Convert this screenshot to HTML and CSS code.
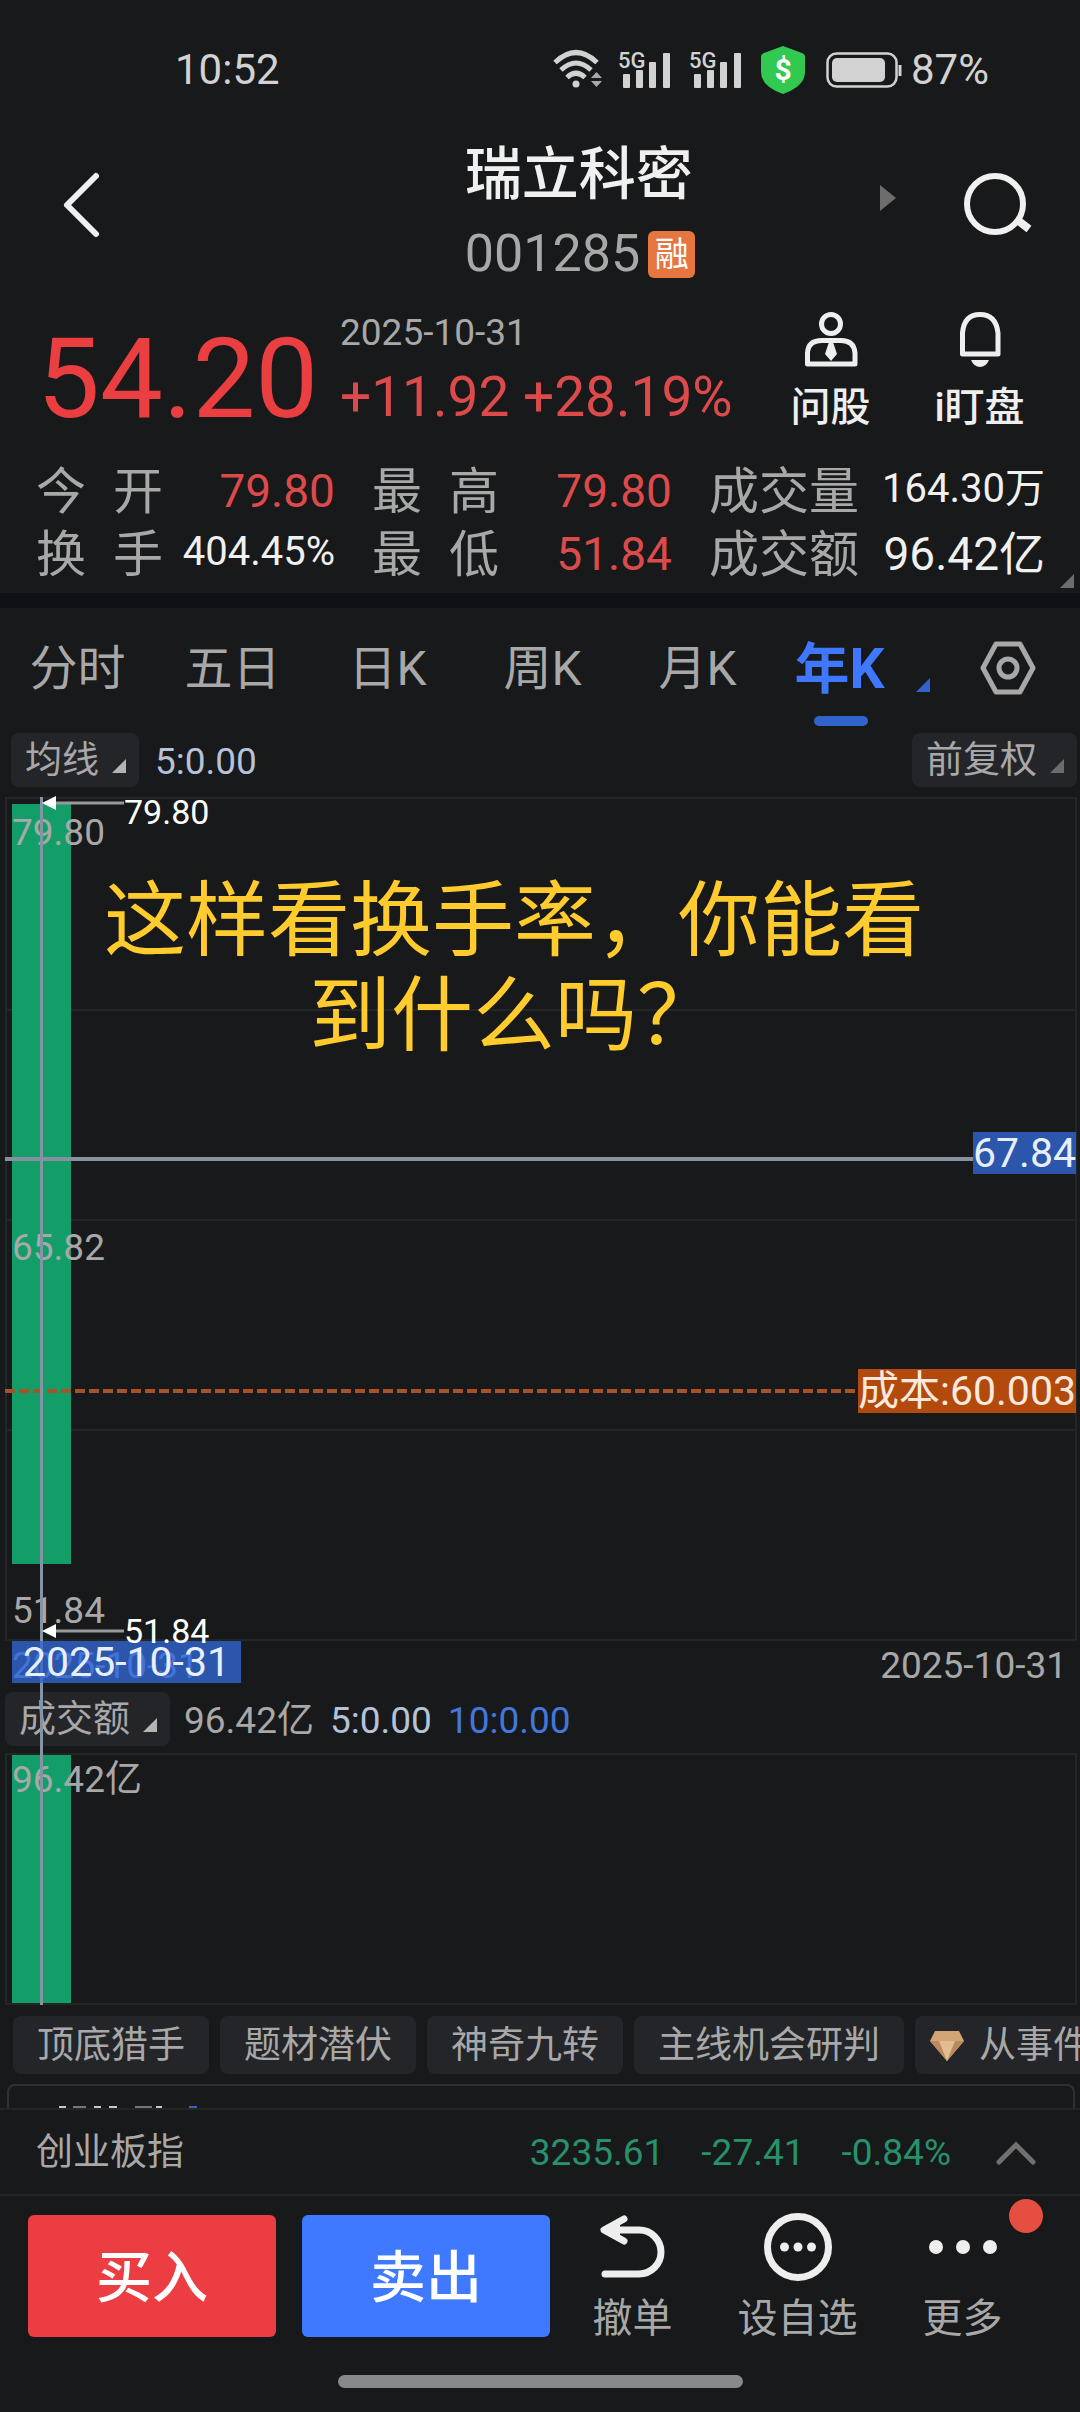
FILE: index.html
```html
<!DOCTYPE html>
<html lang="zh-CN">
<head>
<meta charset="utf-8">
<meta name="viewport" content="width=device-width, initial-scale=1">
<title>瑞立科密 001285</title>
<link rel="stylesheet" href="styles.css">
</head>
<body>
<div class="status">
  <time class="clock">10:52</time>
  <div class="indicators">
    <svg class="wifi" width="50" height="40" viewBox="0 0 50 40" fill="none" stroke="#d2d2d2" stroke-width="5">
      <path d="M2 12.500Q23 -7.500 44 12.500M8 20Q23 6 38 20M14 27.500Q23 19 32 27.500"/>
      <circle cx="23" cy="34" r="3.500" fill="#d2d2d2" stroke="none"/>
      <path d="M38 28l5.500-6 5.500 6zM38 31l5.500 6 5.500-6z" fill="#a8a8a8" stroke="none"/>
    </svg>
    <svg class="signal" width="54" height="40" viewBox="0 0 54 40" fill="#d2d2d2">
      <text class="net" x="0" y="18">5G</text>
      <rect x="5" y="24" width="7" height="14" rx="1"/><rect x="18" y="20" width="7" height="18" rx="1"/><rect x="31" y="12" width="7" height="26" rx="1"/><rect x="45" y="3" width="7" height="35" rx="1"/>
    </svg>
    <svg class="signal" width="54" height="40" viewBox="0 0 54 40" fill="#d2d2d2">
      <text class="net" x="0" y="18">5G</text>
      <rect x="5" y="24" width="7" height="14" rx="1"/><rect x="18" y="20" width="7" height="18" rx="1"/><rect x="31" y="12" width="7" height="26" rx="1"/><rect x="45" y="3" width="7" height="35" rx="1"/>
    </svg>
    <svg class="shield" width="46" height="50" viewBox="0 0 46 50">
      <path d="M23 1L42 8Q45 9 45 12V27Q45 41 23 49Q1 41 1 27V12Q1 9 4 8Z" fill="#32c951"/>
      <text class="dollar" x="23" y="35" text-anchor="middle">$</text>
    </svg>
    <svg class="battery" width="76" height="38" viewBox="0 0 76 38">
      <rect x="1.500" y="2.500" width="69" height="33" rx="9" fill="none" stroke="#d2d2d2" stroke-width="2.500"/>
      <rect x="6" y="7" width="53" height="24" rx="5" fill="#d2d2d2"/>
      <path d="M74 14v11" stroke="#d2d2d2" stroke-width="3"/>
    </svg>
    <span class="percent">87%</span>
  </div>
</div>

<header class="header">
  <button class="icon-btn back" aria-label="返回">
    <svg width="40" height="68" viewBox="0 0 40 68" fill="none" stroke="#f0f0f0" stroke-width="6" stroke-linecap="round" stroke-linejoin="round"><path d="M34 5L5 34L34 63"/></svg>
  </button>
  <div class="title">
    <h1>瑞立科密</h1>
    <p class="code">001285 <span class="badge">融</span></p>
  </div>
  <button class="icon-btn next" aria-label="下一只">
    <svg width="18" height="28" viewBox="0 0 18 28" fill="#6d6d6d"><path d="M1 1L17 14L1 27Z"/></svg>
  </button>
  <button class="icon-btn search" aria-label="搜索">
    <svg width="70" height="66" viewBox="0 0 70 66" fill="none" stroke="#f0f0f0" stroke-width="6"><circle cx="32" cy="32" r="28"/><path d="M53 47L66 57" stroke-width="8"/></svg>
  </button>
</header>

<section class="quote">
  <div class="price">54.20</div>
  <div class="change">
    <time class="day">2025-10-31</time>
    <div class="delta">+11.92 +28.19%</div>
  </div>
  <button class="quick">
    <svg width="56" height="56" viewBox="0 0 56 56" fill="none" stroke="#eee" stroke-width="5"><circle cx="28" cy="13" r="9.500"/><path d="M4.500 53V42Q5 29.500 19 29.500H38Q51 29.500 52 42V53Z" stroke-linejoin="round"/><path d="M26 31h4l4 12l-6 7l-6-7z" fill="#eee" stroke="none"/></svg>
    <span>问股</span>
  </button>
  <button class="quick">
    <svg width="56" height="56" viewBox="0 0 56 56" fill="none" stroke="#eee" stroke-width="5"><path d="M10.500 43V22Q12 3.500 28 3.500Q44 3.500 46 22V43Z" stroke-linejoin="round"/><path d="M19 49H37Q34 56 28 56Q22 56 19 49Z" fill="#eee" stroke="none"/></svg>
    <span>i盯盘</span>
  </button>
</section>

<dl class="stats">
  <div><dt>今开</dt><dd class="up">79.80</dd></div>
  <div><dt>最高</dt><dd class="up">79.80</dd></div>
  <div><dt class="wide">成交量</dt><dd class="small">164.30万</dd></div>
  <div><dt>换手</dt><dd class="small">404.45%</dd></div>
  <div><dt>最低</dt><dd class="up">51.84</dd></div>
  <div><dt class="wide">成交额</dt><dd>96.42亿</dd></div>
  <i class="corner"></i>
</dl>

<nav class="tabs">
  <button>分时</button>
  <button>五日</button>
  <button>日K</button>
  <button>周K</button>
  <button>月K</button>
  <button class="active"><span>年K</span><i class="fold blue"></i></button>
  <button class="settings" aria-label="设置">
    <svg width="58" height="56" viewBox="0 0 58 56" fill="none" stroke="#a8a8a8" stroke-width="5" stroke-linejoin="round"><path d="M17 4H41L54 28L41 52H17L4 28Z"/><circle cx="29" cy="28" r="9"/></svg>
  </button>
</nav>

<main>
  <div class="tools-row">
    <button class="pill">均线<i class="fold"></i></button>
    <span class="ma5">5:0.00</span>
    <button class="pill right">前复权<i class="fold dim"></i></button>
  </div>

  <div class="charts">
    <div class="plot price-plot">
      <div class="cell"></div><div class="cell"></div><div class="cell"></div><div class="cell"></div>
      <div class="candle"></div>
      <span class="axis axis-top">79.80</span>
      <span class="axis axis-mid">65.82</span>
      <span class="axis axis-low">51.84</span>
      <div class="cost"><span>成本:60.003</span></div>
      <div class="cursor"><span>67.84</span></div>
      <p class="caption">这样看换手率，你能看<br>到什么吗？</p>
      <div class="pointer high"><svg width="82" height="16" viewBox="0 0 82 16"><path d="M12 8H82" stroke="#999" stroke-width="3"/><path d="M0 8L14 1V15Z" fill="#fff"/></svg><span>79.80</span></div>
      <div class="pointer low"><svg width="82" height="16" viewBox="0 0 82 16"><path d="M12 8H82" stroke="#999" stroke-width="3"/><path d="M0 8L14 1V15Z" fill="#fff"/></svg><span>51.84</span></div>
    </div>
    <div class="dates">
      <time class="ghost">2025-10-31</time>
      <time>2025-10-31</time>
      <time class="picked">2025-10-31</time>
    </div>
    <div class="volume-row">
      <button class="pill">成交额<i class="fold"></i></button>
      <span class="amount">96.42亿</span>
      <span class="ma5">5:0.00</span>
      <span class="ma10">10:0.00</span>
    </div>
    <div class="plot volume-plot">
      <div class="volume-bar"></div>
      <span class="axis">96.42亿</span>
    </div>
    <div class="crosshair"></div>
  </div>

  <div class="strategies">
    <button>顶底猎手</button>
    <button>题材潜伏</button>
    <button>神奇九转</button>
    <button>主线机会研判</button>
    <button class="vip"><svg width="36" height="32" viewBox="0 0 36 32"><path d="M6 1H30L35 11L18 31L1 11Z" fill="#d3a574"/><path d="M1 11H35L18 31Z" fill="#b98a5c"/><path d="M10 11H26L18 31Z" fill="#e2bd92"/></svg>从事件</button>
  </div>
  <div class="card">
    <svg width="140" height="1" viewBox="0 0 140 1"><path d="M0 0H7M35 0H42M50 0H58M97 0H103" stroke="#c8c8c8" stroke-width="2"/><path d="M14 0H27M76 0H93" stroke="#777" stroke-width="2"/><path d="M130 0H138" stroke="#3a66b8" stroke-width="2"/></svg>
  </div>
</main>

<div class="index-bar">
  <span class="index-name">创业板指</span>
  <span>3235.61</span>
  <span>-27.41</span>
  <span>-0.84%</span>
  <button class="icon-btn expand" aria-label="展开"><svg width="44" height="28" viewBox="0 0 44 28" fill="none" stroke="#707070" stroke-width="5" stroke-linecap="round"><path d="M5 23L22 6L39 23"/></svg></button>
</div>

<footer class="actions">
  <div class="trade">
    <button class="buy">买入</button>
    <button class="sell">卖出</button>
  </div>
  <div class="tools">
    <button>
      <svg width="72" height="72" viewBox="0 0 72 72" fill="none" stroke="#eee" stroke-width="7" stroke-linecap="round" stroke-linejoin="round"><path d="M8 63H42A22 22 0 0 0 42 19H8M27 8L7 19L27 30"/><path d="M7 19L22 11V27Z" fill="#eee" stroke-width="2"/></svg>
      <span>撤单</span>
    </button>
    <button>
      <svg width="72" height="72" viewBox="0 0 72 72" fill="#eee"><circle cx="36" cy="36" r="30.500" fill="none" stroke="#eee" stroke-width="7"/><circle cx="22.500" cy="36" r="4.500"/><circle cx="36" cy="36" r="4.500"/><circle cx="49.500" cy="36" r="4.500"/></svg>
      <span>设自选</span>
    </button>
    <button>
      <svg width="72" height="72" viewBox="0 0 72 72" fill="#eee"><circle cx="9" cy="36" r="7"/><circle cx="36" cy="36" r="7"/><circle cx="63" cy="36" r="7"/></svg>
      <span>更多</span>
      <i class="dot"></i>
    </button>
  </div>
</footer>
<div class="home"></div>
</body>
</html>
```
FILE: styles.css
```css
* {
  box-sizing: border-box;
}

body {
  margin: 0;
  background: #17191a;
  color: #a8a8a8;
  font-family: Roboto, "Noto Sans CJK SC", sans-serif;
  font-size: 37px;
  line-height: 48px;
  overflow-x: hidden;
}

button {
  margin: 0;
  padding: 0;
  border: 0;
  background: none;
  color: inherit;
  font: inherit;
  white-space: nowrap;
}

svg {
  display: block;
  flex: none;
  overflow: visible;
}

h1,
p,
dl,
dd {
  margin: 0;
}

/* Status bar */
.status {
  display: flex;
  justify-content: space-between;
  align-items: center;
  height: 140px;
  padding: 0 91px 0 175px;
  color: #d2d2d2;
  font-size: 42px;
}

.indicators {
  display: flex;
  align-items: center;
}

.wifi {
  margin-right: 15px;
}

.signal {
  margin-right: 17px;
}

.net {
  font-size: 22px;
  font-weight: 500;
}

.shield {
  margin-right: 20px;
}

.dollar {
  fill: #fff;
  font-size: 30px;
  font-weight: 700;
}

.battery {
  margin-right: 9px;
}

/* Title */
.header {
  display: grid;
  grid-template-columns: 45% 1fr auto auto;
  align-items: start;
  height: 160px;
  padding-right: 47px;
}

.back {
  justify-self: start;
  padding: 31px 40px 0 62px;
}

.title h1 {
  color: #f0f0f0;
  font-size: 57px;
  font-weight: 500;
  line-height: 70px;
}

.code {
  display: flex;
  align-items: center;
  gap: 8px;
  margin-top: 20px;
  font-size: 52px;
}

.badge {
  width: 47px;
  height: 47px;
  border-radius: 6px;
  background: #e5763f;
  color: #fff;
  font-size: 34px;
  line-height: 47px;
  text-align: center;
}

.next {
  padding: 44px 66px 0 0;
}

.search {
  padding-top: 32px;
}

/* Quote */
.quote {
  display: grid;
  grid-template-columns: 303px 1fr 149px 149px;
  height: 160px;
  padding: 11px 26px 0 37px;
}

.price {
  color: #ea3e41;
  font-size: 112px;
  line-height: 136px;
}

.day {
  display: block;
  font-size: 37px;
  line-height: 44px;
}

.delta {
  margin-top: 12px;
  color: #dc4a4b;
  font-size: 55px;
  line-height: 60px;
  white-space: nowrap;
}

.quick {
  display: flex;
  flex-direction: column;
  align-items: center;
  gap: 17px;
  color: #eee;
  font-size: 40px;
  font-weight: 500;
}

/* Key figures */
.stats {
  display: grid;
  grid-template-columns: 298fr 299fr 335fr;
  column-gap: 37px;
  position: relative;
  padding: 1px 35px 6px 36px;
  border-bottom: 15px solid #101115;
}

.stats div {
  display: flex;
  justify-content: space-between;
  height: 63px;
  line-height: 63px;
  white-space: nowrap;
}

.stats dt {
  width: 127px;
  font-size: 50px;
  text-align-last: justify;
}

.stats .wide {
  width: auto;
}

.stats dd {
  color: #f0f0f0;
  font-size: 46px;
  line-height: 60px;
}

.stats .small {
  font-size: 40px;
  line-height: 56px;
}

.stats .up {
  color: #dc4a4b;
}

.fold,
.corner {
  width: 14px;
  height: 14px;
  background: #b4b4b4;
  clip-path: polygon(100% 0, 100% 100%, 0 100%);
}

.corner {
  position: absolute;
  right: 6px;
  bottom: 5px;
  background: #6d6d6d;
}

.fold.dim {
  background: #6d6d6d;
}

.fold.blue {
  background: #3063cb;
}

/* Period tabs */
.tabs {
  display: grid;
  grid-template-columns: repeat(6, 155fr) 150fr;
  height: 120px;
  font-size: 48px;
}

.tabs button {
  display: flex;
  align-items: center;
  justify-content: center;
  padding-top: 2px;
}

.tabs .active {
  position: relative;
  padding-right: 26px;
  color: #3f78ff;
  font-size: 55px;
  font-weight: 700;
}

.tabs .settings {
  padding: 0 0 0 6px;
}

.active .fold {
  position: absolute;
  right: 0;
  bottom: 36px;
}

.active::after {
  content: "";
  position: absolute;
  left: 39px;
  bottom: 2px;
  width: 54px;
  height: 10px;
  border-radius: 5px;
  background: #3063cb;
}

/* Chart toolbar */
.tools-row {
  display: flex;
  align-items: center;
  padding: 5px 3px 10px 11px;
}

.pill {
  display: flex;
  align-items: center;
  gap: 13px;
  height: 54px;
  padding: 2px 13px 0 14px;
  border-radius: 8px;
  background: #242529;
}

.pill .fold {
  margin-top: 10px;
}

.pill.right {
  margin-left: auto;
}

.ma5,
.ma10,
.amount {
  padding-top: 3px;
}

.ma5 {
  margin-left: 16px;
  color: #b5c2d9;
}

.ma10 {
  margin-left: 16px;
  color: #4377dc;
}

/* Charts */
.charts {
  position: relative;
  margin: 0 3px 0 5px;
}

.plot {
  position: relative;
  border: 2px solid #242527;
}

.price-plot {
  display: grid;
  grid-template-rows: repeat(4, 1fr);
  height: 844px;
}

.cell + .cell {
  border-top: 2px solid #242527;
}

.candle,
.volume-bar {
  position: absolute;
  left: 5px;
  width: 59px;
  background: #139e69;
}

.candle {
  top: 5px;
  height: 760px;
}

.volume-bar {
  top: 0;
  bottom: 0;
}

.axis {
  position: absolute;
  left: 5px;
}

.axis-top {
  top: 10px;
}

.axis-mid {
  top: 425px;
}

.axis-low {
  bottom: 4px;
}

.cost,
.cursor {
  position: absolute;
  left: -2px;
  right: -1px;
  display: flex;
  align-items: center;
  justify-content: flex-end;
  font-size: 41px;
}

.cost {
  top: 570px;
}

.cursor {
  top: 333px;
}

.cost::before,
.cursor::before {
  content: "";
  flex: 1;
}

.cost::before {
  height: 4px;
  background: repeating-linear-gradient(90deg, #a55327 0 10px, transparent 10px 14px);
}

.cursor::before {
  height: 4px;
  margin-top: 12px;
  background: #8790a0;
}

.cost span {
  background: #b34a0d;
  color: #fbe9df;
  line-height: 44px;
}

.cursor span {
  background: #2c56ab;
  color: #e8effc;
  line-height: 42px;
}

.caption {
  position: absolute;
  top: 75px;
  left: 0;
  right: 54px;
  color: #ffcb2d;
  font-size: 82px;
  line-height: 95px;
  text-align: center;
}

.pointer {
  position: absolute;
  z-index: 3;
  left: 35px;
  display: flex;
  color: #fff;
  font-size: 34px;
  line-height: 34px;
}

.high {
  top: -4px;
}

.low {
  bottom: -9px;
  align-items: center;
}

.dates {
  display: flex;
  justify-content: space-between;
  position: relative;
  padding: 1px 10px 2px 7px;
}

.ghost {
  color: #86a8ff;
}

.picked {
  position: absolute;
  z-index: 2;
  left: 7px;
  top: 0;
  padding: 0 11px;
  background: rgba(49, 101, 207, 0.8);
  color: #e8effc;
  font-size: 41px;
  line-height: 42px;
}

.volume-row {
  display: flex;
  align-items: center;
  padding-bottom: 7px;
}

.amount {
  margin-left: 14px;
}

.volume-plot {
  height: 252px;
}

.volume-plot .axis {
  top: 1px;
}

.crosshair {
  position: absolute;
  z-index: 1;
  top: 0;
  bottom: 0;
  left: 35px;
  width: 3px;
  background: #8395a3;
}

/* Strategy shortcuts */
.strategies {
  display: flex;
  gap: 11px;
  overflow: hidden;
  padding: 11px 0 10px 13px;
}

.strategies button {
  display: flex;
  flex: none;
  align-items: center;
  gap: 14px;
  height: 58px;
  padding: 2px 24px 0;
  border-radius: 8px;
  background: #242529;
}

.strategies .vip {
  padding: 2px 14px 0;
}

.card {
  display: flex;
  align-items: flex-end;
  height: 24px;
  margin: 0 5px 0 7px;
  padding-left: 50px;
  border: 2px solid #303133;
  border-bottom: 0;
  border-radius: 8px 8px 0 0;
}

/* Index strip */
.index-bar {
  display: flex;
  align-items: center;
  gap: 37px;
  height: 88px;
  padding: 2px 42px 0 36px;
  border-top: 2px solid #242527;
  border-bottom: 2px solid #242527;
  color: #27926a;
}

.index-name {
  margin-right: auto;
  color: #a8a8a8;
}

.expand {
  margin-left: 6px;
}

/* Bottom actions */
.actions {
  display: flex;
  padding: 15px 35px 0 28px;
}

.trade {
  display: flex;
  flex: 522;
  gap: 26px;
  padding-top: 4px;
}

.trade button {
  flex: 1;
  height: 122px;
  padding-top: 3px;
  border-radius: 6px;
  color: #fff;
  font-size: 56px;
  font-weight: 500;
}

.buy {
  background: #ec3d42;
}

.sell {
  background: #3f79ff;
}

.tools {
  display: grid;
  flex: 495;
  grid-template-columns: repeat(3, 1fr);
  font-size: 40px;
}

.tools button {
  display: flex;
  flex-direction: column;
  align-items: center;
  gap: 12px;
  position: relative;
}

.dot {
  position: absolute;
  top: -12px;
  right: 2px;
  width: 34px;
  height: 34px;
  border-radius: 50%;
  background: #e64f3f;
}

.home {
  width: 405px;
  height: 13px;
  margin: 32px auto 24px;
  border-radius: 7px;
  background: #88898b;
}
```
